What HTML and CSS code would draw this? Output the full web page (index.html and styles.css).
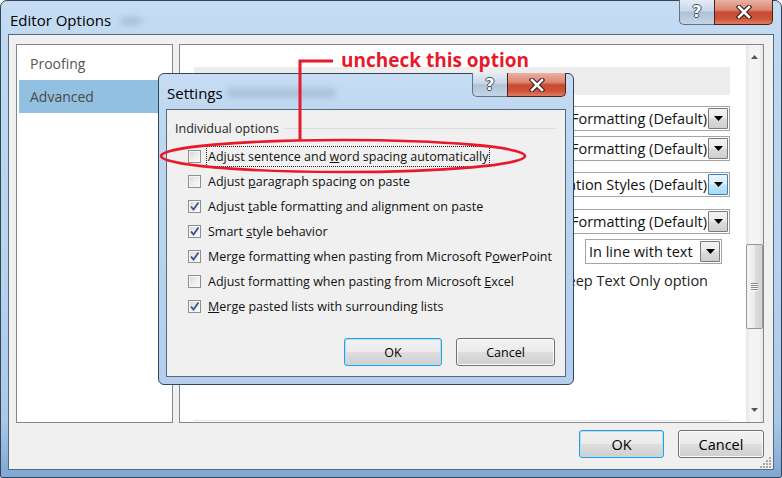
FILE: index.html
```html
<!DOCTYPE html>
<html>
<head>
<meta charset="utf-8">
<title>Editor Options</title>
<link rel="stylesheet" href="styles.css">
</head>
<body>
<div class="window">
  <div class="titlebar">
    <span class="title">Editor Options</span>
    <span class="title-ghost"></span>
    <div class="caption">
      <div class="cap-help"><span class="q">?</span></div>
      <div class="cap-close">
        <svg width="16" height="14" viewBox="0 0 16 14"><path d="M3 2 L13 12 M13 2 L3 12" stroke="#3b1a14" stroke-width="4.6" stroke-linecap="square" fill="none"/><path d="M3 2 L13 12 M13 2 L3 12" stroke="#fff" stroke-width="2.6" stroke-linecap="square" fill="none"/></svg>
      </div>
    </div>
  </div>
  <div class="client">
    <div class="panes">
      <div class="nav">
        <div class="nav-item">Proofing</div>
        <div class="nav-item selected">Advanced</div>
      </div>
      <div class="content">
        <div class="content-body">
          <div class="section-head"></div>
          <div class="opt-row r1"><div class="combo"><span class="combo-text"><span>Keep Source Formatting (Default)</span></span><span class="combo-btn"><svg width="9" height="5" viewBox="0 0 9 5"><path d="M0 0 H9 L4.5 5 Z" fill="#000"/></svg></span></div></div>
          <div class="opt-row r2"><div class="combo"><span class="combo-text"><span>Keep Source Formatting (Default)</span></span><span class="combo-btn"><svg width="9" height="5" viewBox="0 0 9 5"><path d="M0 0 H9 L4.5 5 Z" fill="#000"/></svg></span></div></div>
          <div class="opt-row r3"><div class="combo"><span class="combo-text"><span>Use Destination Styles (Default)</span></span><span class="combo-btn hot"><svg width="9" height="5" viewBox="0 0 9 5"><path d="M0 0 H9 L4.5 5 Z" fill="#000"/></svg></span></div></div>
          <div class="opt-row r4"><div class="combo"><span class="combo-text"><span>Keep Source Formatting (Default)</span></span><span class="combo-btn"><svg width="9" height="5" viewBox="0 0 9 5"><path d="M0 0 H9 L4.5 5 Z" fill="#000"/></svg></span></div></div>
          <div class="opt-row r5"><div class="combo small"><span class="combo-text left"><span>In line with text</span></span><span class="combo-btn"><svg width="9" height="5" viewBox="0 0 9 5"><path d="M0 0 H9 L4.5 5 Z" fill="#000"/></svg></span></div></div>
          <div class="opt-row r6"><span class="opt-text"><span>Keep Text Only option</span></span></div>
          <div class="section-rule"></div>
        </div>
        <div class="vscroll">
          <div class="sb-arrow"><svg width="7" height="4" viewBox="0 0 7 4"><path d="M0 4 H7 L3.5 0 Z" fill="#555"/></svg></div>
          <div class="sb-track">
            <div class="sb-thumb"><span class="grip-line"></span><span class="grip-line"></span><span class="grip-line"></span><span class="grip-line"></span></div>
          </div>
          <div class="sb-arrow"><svg width="7" height="4" viewBox="0 0 7 4"><path d="M0 0 H7 L3.5 4 Z" fill="#555"/></svg></div>
        </div>
      </div>
    </div>
    <div class="footer">
      <button class="btn default">OK</button>
      <button class="btn">Cancel</button>
    </div>
    <svg class="size-grip" width="12" height="12" viewBox="0 0 12 12">
      <g fill="#a8a8a8">
        <rect x="9" y="1" width="2" height="2"/>
        <rect x="6" y="4" width="2" height="2"/><rect x="9" y="4" width="2" height="2"/>
        <rect x="3" y="7" width="2" height="2"/><rect x="6" y="7" width="2" height="2"/><rect x="9" y="7" width="2" height="2"/>
        <rect x="0" y="10" width="2" height="2"/><rect x="3" y="10" width="2" height="2"/><rect x="6" y="10" width="2" height="2"/><rect x="9" y="10" width="2" height="2"/>
      </g>
    </svg>
  </div>
</div>

<div class="settings">
  <div class="s-titlebar">
    <span class="s-title">Settings</span>
    <span class="s-ghost"></span>
    <div class="caption s-caption">
      <div class="cap-help"><span class="q">?</span></div>
      <div class="cap-close">
        <svg width="16" height="14" viewBox="0 0 16 14"><path d="M3 2 L13 12 M13 2 L3 12" stroke="#3b1a14" stroke-width="4.6" stroke-linecap="square" fill="none"/><path d="M3 2 L13 12 M13 2 L3 12" stroke="#fff" stroke-width="2.6" stroke-linecap="square" fill="none"/></svg>
      </div>
    </div>
  </div>
  <div class="s-client">
    <div class="group-head"><span>Individual options</span><span class="group-rule"></span></div>
    <ul class="checks">
      <li class="check"><span class="cb"></span><span class="cb-label focus">Adjust sentence and <u>w</u>ord spacing automatically</span></li>
      <li class="check"><span class="cb"></span><span class="cb-label">Adjust <u>p</u>aragraph spacing on paste</span></li>
      <li class="check"><span class="cb on"><svg width="11" height="11" viewBox="0 0 11 11"><path d="M2 5.5 L4.5 8.5 L9.5 1.5" stroke="#3c5193" stroke-width="1.8" fill="none"/></svg></span><span class="cb-label">Adjust <u>t</u>able formatting and alignment on paste</span></li>
      <li class="check"><span class="cb on"><svg width="11" height="11" viewBox="0 0 11 11"><path d="M2 5.5 L4.5 8.5 L9.5 1.5" stroke="#3c5193" stroke-width="1.8" fill="none"/></svg></span><span class="cb-label">Smart <u>s</u>tyle behavior</span></li>
      <li class="check"><span class="cb on"><svg width="11" height="11" viewBox="0 0 11 11"><path d="M2 5.5 L4.5 8.5 L9.5 1.5" stroke="#3c5193" stroke-width="1.8" fill="none"/></svg></span><span class="cb-label">Merge formatting when pasting from Microsoft P<u>o</u>werPoint</span></li>
      <li class="check"><span class="cb"></span><span class="cb-label">Adjust formatting when pasting from Microsoft <u>E</u>xcel</span></li>
      <li class="check"><span class="cb on"><svg width="11" height="11" viewBox="0 0 11 11"><path d="M2 5.5 L4.5 8.5 L9.5 1.5" stroke="#3c5193" stroke-width="1.8" fill="none"/></svg></span><span class="cb-label"><u>M</u>erge pasted lists with surrounding lists</span></li>
    </ul>
    <div class="s-footer">
      <button class="btn s-btn default">OK</button>
      <button class="btn s-btn">Cancel</button>
    </div>
  </div>
</div>

<svg class="annot" width="782" height="478" viewBox="0 0 782 478">
  <polyline points="333,61 300,61 300,141" fill="none" stroke="#e8192c" stroke-width="3"/>
  <ellipse cx="343" cy="156" rx="182" ry="16" fill="none" stroke="#e8192c" stroke-width="2.7"/>
</svg>
<div class="annot-text">uncheck this option</div>
</body>
</html>
```

FILE: styles.css
```css
* { box-sizing: border-box; }
html, body { margin: 0; padding: 0; }
body {
  width: 782px;
  height: 478px;
  overflow: hidden;
  position: relative;
  background: #fff;
  font-family: "Open Sans", "Noto Sans", sans-serif;
  color: #000;
}

/* ---------- main window ---------- */
.window {
  width: 782px;
  height: 478px;
  border: 1px solid #31455b;
  border-radius: 7px 7px 2px 2px;
  background: linear-gradient(180deg, #c6ddf3 0%, #bfd8f1 10%, #b9d3ee 55%, #a9c8e8 88%, #7fa7d2 100%);
  padding: 0 7px 7px;
  display: flex;
  flex-direction: column;
  position: relative;
}
.titlebar {
  height: 33px;
  display: flex;
  align-items: flex-start;
  position: relative;
}
.title {
  font-size: 15px;
  line-height: 18px;
  margin: 10px 0 0 2px;
  color: #000;
}
.title-ghost {
  width: 24px;
  height: 8px;
  margin: 16px 0 0 8px;
  border-radius: 50%;
  background: rgba(70, 90, 110, 0.22);
  filter: blur(3px);
}
.caption {
  margin-left: auto;
  margin-top: -1px;
  margin-right: 1px;
  display: flex;
}
.cap-help {
  width: 35px;
  height: 25px;
  border: 1px solid #5f7388;
  border-top: none;
  border-right: none;
  border-radius: 0 0 0 5px;
  background: linear-gradient(180deg, #e3ecf5 0%, #c9d7e6 45%, #b0c2d6 52%, #c5d5e6 100%);
  display: flex;
  align-items: center;
  justify-content: center;
}
.q {
  font-family: "DejaVu Sans", sans-serif;
  font-weight: bold;
  font-size: 16px;
  line-height: 16px;
  color: #fff;
  text-shadow: 1px 0 0 #3e4e60, -1px 0 0 #3e4e60, 0 1px 0 #3e4e60, 0 -1px 0 #3e4e60;
}
.cap-close {
  width: 59px;
  height: 25px;
  border: 1px solid #4d1e17;
  border-top: none;
  border-radius: 0 0 5px 0;
  background: linear-gradient(180deg, #eab1a4 0%, #dc8772 40%, #c94a32 52%, #cd5439 78%, #e07c63 100%);
  display: flex;
  align-items: center;
  justify-content: center;
}

.client {
  flex: 1;
  border: 1px solid #56687a;
  background: #f0f0f0;
  padding: 9px 9px 0 7px;
  position: relative;
}
.panes {
  display: flex;
  gap: 6px;
  height: 379px;
}
.nav {
  flex: none;
  width: 157px;
  border: 1px solid #828790;
  background: #fff;
  padding: 2px 1px;
}
.nav-item {
  height: 33px;
  line-height: 33px;
  padding-left: 11px;
  margin-left: 1px;
  font-size: 14px;
  color: #555;
}
.nav-item.selected {
  background: #92c0e0;
  color: #4a4a4a;
}
.content {
  flex: none;
  width: 585px;
  border: 1px solid #828790;
  background: #fff;
  display: flex;
  overflow: hidden;
}
.content-body {
  flex: 1;
  min-width: 0;
  padding: 22px 16px 0 14px;
  display: flex;
  flex-direction: column;
}
.section-head {
  height: 28px;
  background: #ededed;
}
.opt-row {
  display: flex;
  align-items: center;
  justify-content: flex-end;
  height: 25px;
  font-size: 14.5px;
  white-space: nowrap;
}
.opt-row.r1 { margin-top: 11px; }
.opt-row.r2 { margin-top: 5px; }
.opt-row.r3 { margin-top: 11px; }
.opt-row.r4 { margin-top: 12px; }
.opt-row.r5 { margin-top: 5px; height: 25px; }
.opt-row.r6 { margin-top: 5px; height: 22px; padding-right: 22px; }
.opt-text {
  width: 150px;
  overflow: hidden;
  display: flex;
  justify-content: flex-end;
  color: #222;
}
.opt-text span { flex: none; }
.combo {
  flex: none;
  width: 200px;
  height: 25px;
  border: 1px solid #a5a5a5;
  background: #fff;
  display: flex;
  align-items: stretch;
  padding: 1px;
}
.combo.small {
  width: 137px;
  margin-right: 8px;
}
.combo-text {
  flex: 1;
  min-width: 0;
  overflow: hidden;
  display: flex;
  justify-content: flex-end;
  line-height: 21px;
  padding-right: 1px;
  color: #111;
}
.combo-text span { flex: none; }
.combo-text.left {
  justify-content: flex-start;
  padding-left: 2px;
}
.combo-btn {
  flex: none;
  width: 20px;
  border: 1px solid #7a7a7a;
  border-radius: 1px;
  background: linear-gradient(180deg, #f3f3f3 0%, #ebebeb 48%, #dcdcdc 52%, #cfcfcf 100%);
  display: flex;
  align-items: center;
  justify-content: center;
}
.combo-btn.hot {
  border-color: #3c7fb1;
  background: linear-gradient(180deg, #eaf6fd 0%, #d9f0fc 48%, #bee6fd 52%, #a7d9f5 100%);
}
.section-rule {
  margin-top: auto;
  margin-bottom: 1px;
  height: 1px;
  background: #e4e4e4;
}

.vscroll {
  flex: none;
  width: 17px;
  display: flex;
  flex-direction: column;
  background: linear-gradient(90deg, #e6e6e6 0%, #f3f3f3 25%, #f5f5f5 75%, #e6e6e6 100%);
}
.sb-arrow {
  height: 24px;
  display: flex;
  align-items: center;
  justify-content: center;
}
.sb-track {
  flex: 1;
}
.sb-thumb {
  margin-top: 175px;
  height: 85px;
  border: 1px solid #979797;
  border-radius: 2px;
  background: linear-gradient(90deg, #f4f4f4 0%, #ececec 50%, #dcdcdc 55%, #d2d2d2 100%);
  display: flex;
  flex-direction: column;
  align-items: center;
  justify-content: center;
  gap: 1px;
}
.grip-line {
  width: 7px;
  height: 1px;
  background: #8a8a8a;
  box-shadow: 0 1px 0 #fafafa;
}

.footer {
  display: flex;
  justify-content: flex-end;
  gap: 14px;
  margin-top: 7px;
}
.btn {
  height: 28px;
  width: 85px;
  border: 1px solid #707070;
  border-radius: 3px;
  background: linear-gradient(180deg, #f2f2f2 0%, #ebebeb 48%, #dddddd 52%, #cfcfcf 100%);
  box-shadow: inset 0 0 0 1px #fcfcfc;
  font-family: "Open Sans", "Noto Sans", sans-serif;
  font-size: 14.5px;
  color: #000;
  padding: 0;
}
.btn + .btn { width: 86px; }
.btn.default {
  border-color: #3399d6;
  box-shadow: inset 0 0 0 1px #a6e4fb;
}
.size-grip {
  position: absolute;
  right: 1px;
  bottom: 1px;
}

/* ---------- settings dialog ---------- */
.settings {
  position: absolute;
  left: 158px;
  top: 73px;
  width: 416px;
  height: 312px;
  border: 1px solid #31455b;
  border-radius: 6px;
  background: linear-gradient(180deg, #c6ddf3 0%, #bfd8f1 12%, #b9d3ee 60%, #b3cfed 100%);
  padding: 0 7px 7px;
  display: flex;
  flex-direction: column;
}
.s-titlebar {
  height: 35px;
  display: flex;
  align-items: flex-start;
  position: relative;
}
.s-title {
  font-size: 15px;
  line-height: 18px;
  margin: 10px 0 0 1px;
}
.s-ghost {
  position: absolute;
  left: 60px;
  top: 14px;
  width: 110px;
  height: 10px;
  border-radius: 5px;
  background: rgba(70, 90, 110, 0.18);
  filter: blur(3px);
}
.s-caption {
  margin-right: 0;
}
.s-caption .cap-help,
.s-caption .cap-close { height: 24px; }
.s-client {
  flex: 1;
  border: 1px solid #56687a;
  background: #f0f0f0;
  padding: 9px 10px 10px 8px;
  display: flex;
  flex-direction: column;
}
.group-head {
  display: flex;
  align-items: center;
  height: 18px;
  font-size: 12.5px;
  color: #1f1f1f;
}
.group-rule {
  flex: 1;
  height: 1px;
  margin-left: 6px;
  margin-top: 1px;
  background: #d9dde2;
}
.checks {
  list-style: none;
  margin: 7px 0 0;
  padding: 0;
}
.check {
  height: 25px;
  display: flex;
  align-items: center;
  padding-left: 13px;
  font-size: 12.5px;
  color: #111;
}
.cb {
  width: 13px;
  height: 13px;
  border: 1px solid #8e8f8f;
  background: linear-gradient(135deg, #d8d8d8 0%, #eeeeee 55%, #fbfbfb 100%);
  box-shadow: inset 0 0 0 1px #f6f6f6;
  display: flex;
  align-items: center;
  justify-content: center;
  flex: none;
}
.cb svg { display: block; }
.cb-label {
  margin-left: 6px;
  padding: 1px 1px;
  line-height: 17px;
  white-space: nowrap;
}
.cb-label.focus {
  outline: 1px dotted #222;
  outline-offset: 0;
}
.s-footer {
  margin-top: auto;
  display: flex;
  justify-content: flex-end;
  gap: 14px;
}
.s-btn {
  width: 98px;
  font-size: 12.5px;
}
.s-btn + .s-btn { width: 99px; }

/* ---------- annotation ---------- */
.annot {
  position: absolute;
  left: 0;
  top: 0;
  pointer-events: none;
}
.annot-text {
  position: absolute;
  left: 341px;
  top: 49px;
  font-family: "Open Sans", "Noto Sans", sans-serif;
  font-weight: bold;
  font-size: 19px;
  line-height: 22px;
  color: #e8192c;
  white-space: nowrap;
}
```
